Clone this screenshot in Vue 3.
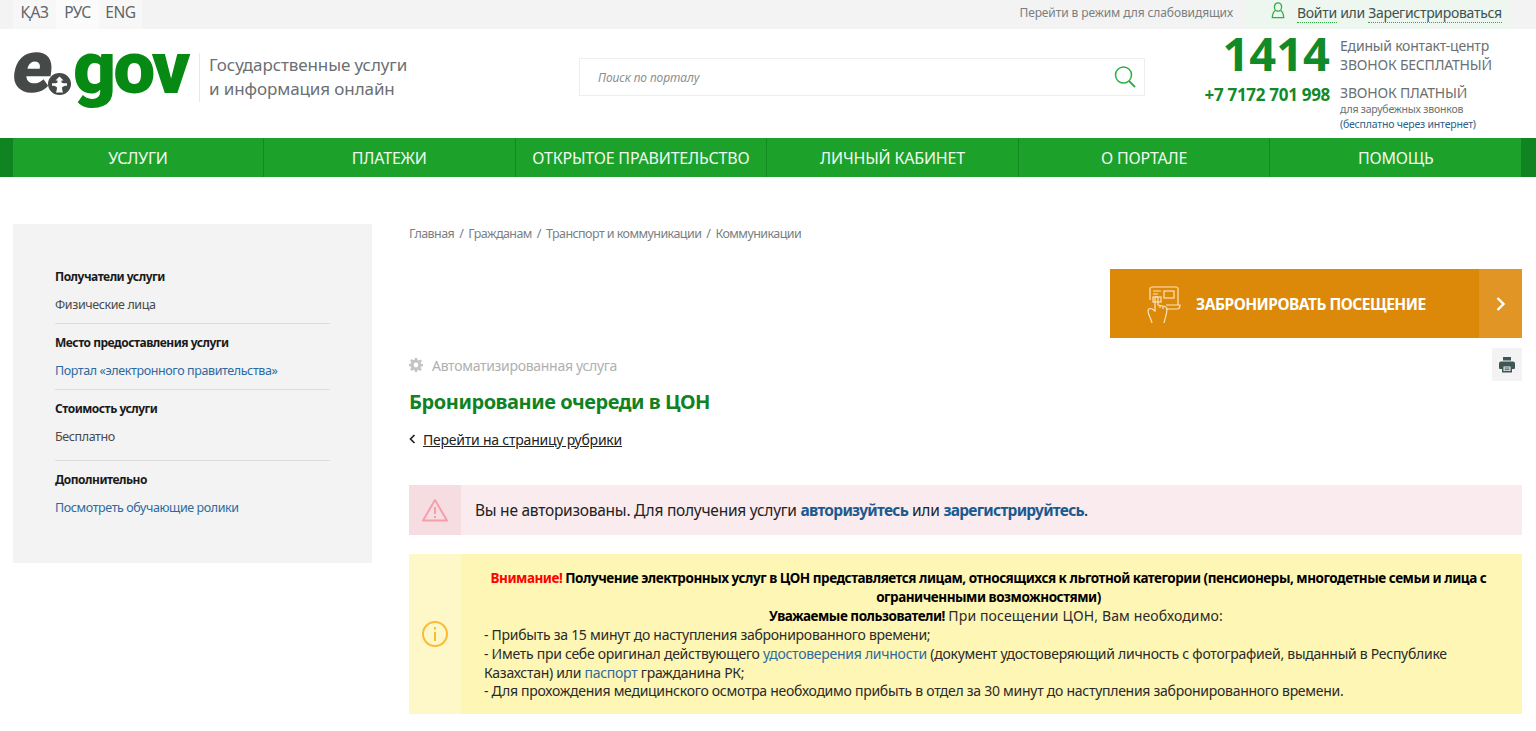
<template>
  <div class="page">
    <div class="topbar">
      <div class="langs">
        <a v-for="lang in langs" :key="lang" class="lang" :class="{ active: lang === 'РУС' }">{{ lang }}</a>
      </div>
      <a class="low-vision">Перейти в режим для слабовидящих</a>
      <div class="login">
        <svg class="user-icon" width="14" height="17" viewBox="0 0 14 17" fill="none" stroke="#2fae47" stroke-width="1.3">
          <ellipse cx="7" cy="5" rx="3.6" ry="4.2" />
          <path d="M4.5 8.5 C2.5 9.5 1.5 11 1.3 15.6 H12.7 C12.5 11 11.5 9.5 9.5 8.5" />
        </svg>
        <span><a class="dotted">Войти</a> или <a class="dotted">Зарегистрироваться</a></span>
      </div>
    </div>

    <header class="header">
      <div class="logo">
        <span class="logo-e">e</span>
        <svg class="logo-mark" width="23" height="22" viewBox="0 0 23 22">
          <ellipse cx="11.5" cy="11" rx="11.5" ry="11" fill="#454a49" />
          <path d="M11.5 3.500 L15.500 7.500 H13.500 V9.500 C15 10.300 17 10.500 19 10.300 V12.800 C17 12.600 15 13.300 14 14.500 C14 16.500 14.500 18 15 19.500 H8 C8.500 18 9 16.500 9 14.500 C8 13.300 6 12.600 4 12.800 V10.300 C6 10.500 8 10.300 9.500 9.500 V7.500 H7.500 Z" fill="#fff" />
        </svg>
        <span class="logo-gov">gov</span>
      </div>
      <div class="slogan">Государственные услуги<br />и информация онлайн</div>
      <div class="search">
        <span class="placeholder">Поиск по порталу</span>
        <svg width="24" height="24" viewBox="0 0 24 24" fill="none" stroke="#2fae47" stroke-width="1.5">
          <circle cx="10.5" cy="10" r="8" />
          <path d="M16 16 L22 22" stroke-width="1.8" />
        </svg>
      </div>
      <div class="contacts">
        <div class="contact-row first">
          <div class="big-number">1414</div>
          <div class="contact-text">Единый контакт-центр<br />ЗВОНОК БЕСПЛАТНЫЙ</div>
        </div>
        <div class="contact-row">
          <div class="phone">+7 7172 701 998</div>
          <div class="contact-text">
            ЗВОНОК ПЛАТНЫЙ
            <div class="small">для зарубежных звонков</div>
            <div class="small blue">(бесплатно через интернет)</div>
          </div>
        </div>
      </div>
    </header>

    <nav class="nav">
      <div class="nav-inner">
        <a v-for="item in navItems" :key="item" class="nav-item">{{ item }}</a>
      </div>
    </nav>

    <div class="content">
      <aside class="sidebar">
        <section v-for="block in sideBlocks" :key="block.title" class="side-block">
          <div class="side-title">{{ block.title }}</div>
          <div class="side-value" :class="{ link: block.link }">{{ block.value }}</div>
        </section>
      </aside>

      <main class="main">
        <div class="crumbs">
          <template v-for="(crumb, i) in crumbs" :key="crumb">
            <span v-if="i" class="sep">/</span>{{ crumb }}
          </template>
        </div>

        <div class="book-row">
          <a class="book">
            <span class="book-body">
              <svg width="34" height="38" viewBox="0 0 34 38" fill="none" stroke="#fbe3bd" stroke-width="1.2">
                <path d="M3 15 V4 a2 2 0 0 1 2-2 H29 a2 2 0 0 1 2 2 V20" />
                <path d="M6 6 H14 M6 9 H11" />
                <rect x="17" y="6" width="10" height="7" />
                <path d="M19 20 H33 C33 23 32 24 30 24 H19" />
                <rect x="6" y="12" width="8" height="5" />
                <path d="M5 38 C4 33 1 30 1 26 C1 23 4 23 6 24.500 L8 26 V13 a1.500 1.500 0 0 1 3 0 V20 L18 21.500 C19.500 22 20 23 20 24 C20 29 18 33 17 38" />
                <path d="M13 20 V23 M16 21 V24" />
              </svg>
              <span class="book-label">ЗАБРОНИРОВАТЬ ПОСЕЩЕНИЕ</span>
            </span>
            <span class="book-arrow">
              <svg width="10" height="14" viewBox="0 0 10 14" fill="none" stroke="#fff" stroke-width="2.4"><path d="M1.500 1 L7.500 7 L1.500 13" /></svg>
            </span>
          </a>
        </div>

        <div class="auto-row">
          <div class="auto-label">
            <svg width="14" height="14" viewBox="0 0 14 14" fill="#c4c4c4">
              <path fill-rule="evenodd" d="M5.800 0 H8.200 L8.600 2 L9.900 2.600 L11.600 1.400 L13 3 L11.700 4.600 L12.200 5.900 L14 6 V8.200 L12.200 8.500 L11.600 9.800 L12.800 11.500 L11.200 13 L9.600 11.800 L8.400 12.200 L8.100 14 H5.900 L5.600 12.200 L4.300 11.700 L2.700 12.900 L1.100 11.300 L2.300 9.700 L1.800 8.400 L0 8.100 V5.900 L1.800 5.600 L2.300 4.300 L1.100 2.700 L2.700 1.100 L4.300 2.300 L5.500 1.800 Z M7 4.600 A2.400 2.400 0 1 0 7 9.400 A2.400 2.400 0 1 0 7 4.600 Z" />
            </svg>
            Автоматизированная услуга
          </div>
          <button class="print">
            <svg width="16" height="16" viewBox="0 0 16 16" fill="#3f5657">
              <path d="M4 0 H12 V3.500 H4 Z" />
              <path fill-rule="evenodd" d="M2 4.500 H14 a2 2 0 0 1 2 2 V11 a1 1 0 0 1-1 1 H13 V15.500 H3 V12 H1 a1 1 0 0 1-1-1 V6.500 a2 2 0 0 1 2-2 Z M4.500 9.500 V14 H11.500 V9.500 Z" />
              <path d="M5.500 10.500 H10.500 V11.500 H5.500 Z M5.500 12.300 H10.500 V13.200 H5.500 Z" />
            </svg>
          </button>
        </div>

        <h1 class="title">Бронирование очереди в ЦОН</h1>

        <div class="back">
          <svg width="7" height="10" viewBox="0 0 7 10" fill="none" stroke="#222" stroke-width="1.7"><path d="M5.500 1 L1.500 5 L5.500 9" /></svg>
          <a class="back-link">Перейти на страницу рубрики</a>
        </div>

        <div class="notice danger">
          <div class="notice-icon">
            <svg width="26" height="24" viewBox="0 0 26 24" fill="none" stroke="#f79eab" stroke-width="2">
              <path d="M13 2 L25 22.500 H1 Z" stroke-linejoin="round" />
              <path d="M13 9 V16 M13 18 V20" />
            </svg>
          </div>
          <div class="notice-text">
            Вы не авторизованы. Для получения услуги <a class="strong-link">авторизуйтесь</a> или <a class="strong-link">зарегистрируйтесь</a>.
          </div>
        </div>

        <div class="notice warning">
          <div class="notice-icon">
            <svg width="26" height="26" viewBox="0 0 26 26" fill="none" stroke="#fbb936" stroke-width="2">
              <circle cx="13" cy="13" r="12" />
              <path d="M13 11 V20 M13 6 V8.500" />
            </svg>
          </div>
          <div class="warning-text">
            <div class="centered lead">
              <b><span class="red">Внимание!</span> Получение электронных услуг в ЦОН представляется лицам, относящихся к льготной категории (пенсионеры, многодетные семьи и лица с ограниченными возможностями)</b>
            </div>
            <div class="centered">
              <b>Уважаемые пользователи!</b> <span class="wide">При посещении ЦОН, Вам необходимо:</span>
            </div>
            <div>- Прибыть за 15 минут до наступления забронированного времени;</div>
            <div>- Иметь при себе оригинал действующего <a class="link">удостоверения личности</a> (документ удостоверяющий личность с фотографией, выданный в Республике Казахстан) или <a class="link">паспорт</a> гражданина РК;</div>
            <div>- Для прохождения медицинского осмотра необходимо прибыть в отдел за 30 минут до наступления забронированного времени.</div>
          </div>
        </div>
      </main>
    </div>
  </div>
</template>

<script setup>
const langs = ['ҚАЗ', 'РУС', 'ENG']
const navItems = ['УСЛУГИ', 'ПЛАТЕЖИ', 'ОТКРЫТОЕ ПРАВИТЕЛЬСТВО', 'ЛИЧНЫЙ КАБИНЕТ', 'О ПОРТАЛЕ', 'ПОМОЩЬ']
const crumbs = ['Главная', 'Гражданам', 'Транспорт и коммуникации', 'Коммуникации']
const sideBlocks = [
  { title: 'Получатели услуги', value: 'Физические лица' },
  { title: 'Место предоставления услуги', value: 'Портал «электронного правительства»', link: true },
  { title: 'Стоимость услуги', value: 'Бесплатно' },
  { title: 'Дополнительно', value: 'Посмотреть обучающие ролики', link: true }
]
</script>

<style>
html, body {
  margin: 0;
  overflow: hidden;
}
</style>

<style scoped>
.page {
  font-family: "Noto Sans", "Open Sans", sans-serif;
  color: #222;
  background: #fff;
  height: 731px;
  overflow: hidden;
}

.topbar {
  height: 29px;
  background: #f3f3f3;
  display: flex;
  align-items: center;
  padding-left: 13px;
}

.langs {
  display: flex;
  height: 29px;
}

.lang {
  width: 43px;
  line-height: 24px;
  text-align: center;
  font-size: 15.500px;
  letter-spacing: -0.400px;
  color: #5f6669;
  background: #f7f7f7;
}

.lang.active {
  background: #fbfbfb;
}

.low-vision {
  margin: -5px 0 0 auto;
  font-size: 12px;
  letter-spacing: -0.100px;
  color: #7a7f82;
}

.login {
  width: 264px;
  height: 29px;
  margin: 0 26px 0 13px;
  background: #eef7ef;
  display: flex;
  align-items: center;
  box-sizing: border-box;
  padding: 0 0 5px 25px;
  font-size: 14px;
  letter-spacing: -0.300px;
  color: #3d5350;
}

.user-icon {
  margin: -4px 12px 0 0;
}

.dotted {
  border-bottom: 1px dotted #2fae47;
}

.header {
  height: 109px;
  display: flex;
  align-items: center;
  padding-left: 13px;
}

.logo {
  width: 176px;
  height: 70px;
  flex: none;
  display: flex;
  align-items: flex-start;
  font-family: Roboto, sans-serif;
  font-weight: 900;
  margin-top: -16px;
}

.logo-e {
  display: inline-block;
  font-size: 74px;
  line-height: 60px;
  color: #454a49;
  width: 35px;
  margin-top: -4px;
  transform: skewX(-8deg);
}

.logo-mark {
  flex: none;
  margin-top: 32px;
}

.logo-gov {
  font-size: 75px;
  line-height: 60px;
  letter-spacing: -3px;
  color: #078a13;
  margin-top: -4px;
  margin-left: 2px;
}

.slogan {
  height: 49px;
  border-left: 1px solid #e8e8e8;
  padding-left: 9px;
  margin-left: 10px;
  margin-top: -13px;
  font-size: 17px;
  line-height: 24.500px;
  letter-spacing: -0.100px;
  color: #6b7073;
  width: 300px;
}

.search {
  width: 566px;
  height: 38px;
  box-sizing: border-box;
  border: 1px solid #eee;
  display: flex;
  align-items: center;
  justify-content: space-between;
  padding: 0 7px 0 18px;
  margin: -14px 0 0 70px;
}

.placeholder {
  margin-top: 1px;
  font-size: 12px;
  font-style: italic;
  color: #8b8f92;
  letter-spacing: -0.100px;
}

.contacts {
  margin-left: auto;
  width: 332px;
  margin-top: -5px;
}

.contact-row {
  display: flex;
}

.big-number {
  width: 126px;
  text-align: right;
  font-size: 47px;
  line-height: 45px;
  font-weight: 700;
  color: #118a2a;
  margin-right: 10px;
}

.phone {
  width: 126px;
  text-align: right;
  white-space: nowrap;
  font-size: 17px;
  font-weight: 700;
  line-height: 24px;
  letter-spacing: -0.300px;
  color: #118a2a;
  margin-right: 10px;
}

.first {
  height: 52px;
}

.first .contact-text {
  padding-top: 5px;
}

.contact-text {
  font-size: 14px;
  line-height: 19px;
  letter-spacing: -0.200px;
  color: #6b7073;
}

.small {
  font-size: 10.500px;
  line-height: 15px;
}

.blue {
  color: #2d5f8a;
}

.nav {
  height: 39px;
  background: #0f8420;
  padding: 0 15px 0 13px;
}

.nav-inner {
  display: grid;
  grid-template-columns: 250px repeat(5, 1fr);
  height: 39px;
  background: #1ca12b;
}

.nav-item {
  display: flex;
  align-items: center;
  justify-content: center;
  font-size: 16px;
  letter-spacing: -0.200px;
  color: #f0faf0;
  border-left: 1px solid #118a22;
}

.nav-item:first-child {
  border-left: 0;
}

.content {
  display: grid;
  grid-template-columns: 359px 1fr;
  column-gap: 37px;
  padding: 0 14px 0 13px;
}

.sidebar {
  margin-top: 47px;
  height: 339px;
  background: #f3f3f3;
  box-sizing: border-box;
  padding: 45px 42px 0;
}

.side-block {
  width: 275px;
  box-sizing: border-box;
  padding-bottom: 10px;
  margin-bottom: 11px;
  border-bottom: 1px solid #dcdcdc;
}

.side-block:nth-child(3) {
  padding-bottom: 15px;
}

.side-block:last-child {
  border-bottom: 0;
}

.side-title {
  font-size: 12px;
  line-height: 16px;
  font-weight: 700;
  letter-spacing: -0.490px;
  color: #1a1a1a;
}

.side-value {
  margin-top: 12px;
  font-size: 12.500px;
  line-height: 16px;
  letter-spacing: -0.400px;
  color: #4a4a4a;
}

.side-value.link {
  color: #2d6a9f;
}

.main {
  min-width: 0;
}

.crumbs {
  margin-top: 49px;
  font-size: 12.500px;
  line-height: 16px;
  letter-spacing: -0.560px;
  color: #7a7f82;
}

.sep {
  margin: 0 5px;
}

.book-row {
  display: flex;
  justify-content: flex-end;
  margin-top: 27px;
}

.book {
  width: 412px;
  height: 69px;
  display: flex;
  background: #dc8909;
  color: #fff;
}

.book-body {
  flex: 1;
  display: flex;
  align-items: center;
  padding-left: 37px;
}

.book-label {
  margin-left: 15px;
  font-size: 15.500px;
  font-weight: 700;
  letter-spacing: -0.500px;
}

.book-arrow {
  width: 43px;
  background: #e19524;
  display: flex;
  align-items: center;
  justify-content: center;
}

.auto-row {
  display: flex;
  justify-content: space-between;
  align-items: center;
  height: 33px;
  margin-top: 10px;
}

.auto-label {
  display: flex;
  align-items: center;
  gap: 9px;
  font-size: 14px;
  letter-spacing: -0.300px;
  color: #b0b0b0;
  margin-top: 1px;
}

.print {
  width: 30px;
  height: 33px;
  padding: 0;
  border: 0;
  background: #f3f3f3;
  display: flex;
  align-items: center;
  justify-content: center;
}

.title {
  margin: 7px 0 0;
  font-size: 20px;
  line-height: 28px;
  font-weight: 700;
  letter-spacing: -0.460px;
  color: #118224;
}

.back {
  display: flex;
  align-items: center;
  margin-top: 13px;
  height: 20px;
  gap: 7px;
}

.back-link {
  font-size: 14px;
  letter-spacing: -0.220px;
  color: #222;
  text-decoration: underline;
}

.notice {
  display: flex;
}

.danger {
  margin-top: 36px;
  height: 50px;
  background: #f9ebee;
}

.warning {
  margin-top: 19px;
  height: 160px;
  background: #fef6b4;
}

.notice-icon {
  width: 52px;
  flex: none;
  display: flex;
  align-items: center;
  justify-content: center;
}

.danger .notice-icon {
  background: #f6dde1;
}

.warning .notice-icon {
  background: #fef7c8;
}

.notice-text {
  padding-left: 14px;
  align-self: center;
  font-size: 15.500px;
  letter-spacing: -0.250px;
}

.strong-link {
  font-weight: 700;
  letter-spacing: -0.720px;
  color: #1c5a8e;
}

.warning-text {
  padding: 15px 14px 0 23px;
  font-size: 14px;
  line-height: 18.900px;
  letter-spacing: -0.270px;
  color: #2a2a2a;
}

.centered {
  text-align: center;
}

.centered b {
  color: #000;
  font-size: 13.500px;
  letter-spacing: -0.470px;
}

.lead {
  padding-right: 15px;
}

.wide {
  letter-spacing: 0.130px;
}

.red {
  color: #f00;
}

.link {
  color: #2d6a9f;
}
</style>
